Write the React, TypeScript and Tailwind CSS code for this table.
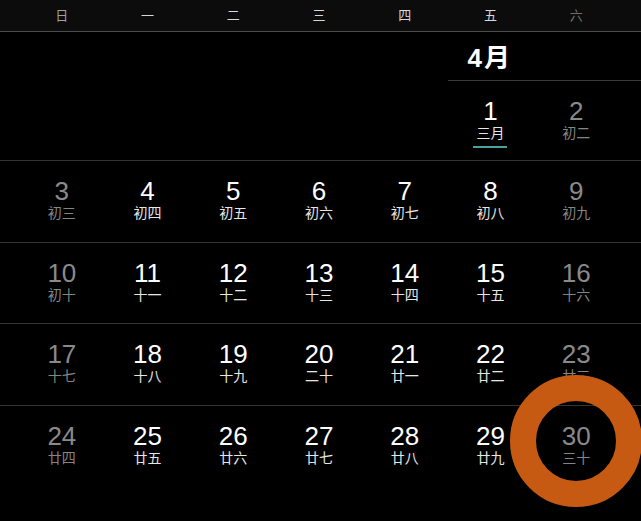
import React from "react";

type Day = { d: number; lunar: string };

const weekdays = ["日", "一", "二", "三", "四", "五", "六"];

const weeks: Day[][] = [
  [
    { d: 3, lunar: "初三" },
    { d: 4, lunar: "初四" },
    { d: 5, lunar: "初五" },
    { d: 6, lunar: "初六" },
    { d: 7, lunar: "初七" },
    { d: 8, lunar: "初八" },
    { d: 9, lunar: "初九" },
  ],
  [
    { d: 10, lunar: "初十" },
    { d: 11, lunar: "十一" },
    { d: 12, lunar: "十二" },
    { d: 13, lunar: "十三" },
    { d: 14, lunar: "十四" },
    { d: 15, lunar: "十五" },
    { d: 16, lunar: "十六" },
  ],
  [
    { d: 17, lunar: "十七" },
    { d: 18, lunar: "十八" },
    { d: 19, lunar: "十九" },
    { d: 20, lunar: "二十" },
    { d: 21, lunar: "廿一" },
    { d: 22, lunar: "廿二" },
    { d: 23, lunar: "廿三" },
  ],
  [
    { d: 24, lunar: "廿四" },
    { d: 25, lunar: "廿五" },
    { d: 26, lunar: "廿六" },
    { d: 27, lunar: "廿七" },
    { d: 28, lunar: "廿八" },
    { d: 29, lunar: "廿九" },
    { d: 30, lunar: "三十" },
  ],
];

function DayCell({ day, weekend, today }: { day: Day; weekend: boolean; today?: boolean }) {
  return (
    <div className="flex flex-col items-center pt-[17px]">
      <div
        className={[
          "text-[26px] leading-[26px]",
          weekend ? "text-[#8a8a8a]" : "text-white",
        ].join(" ")}
      >
        {day.d}
      </div>
      <div
        className={[
          "mt-[1px] text-[14px] leading-[16px]",
          weekend ? "text-[#858585]" : "text-[#e6e6e6]",
        ].join(" ")}
      >
        {day.lunar}
      </div>
      {today && <div className="mt-[5px] h-[2px] w-[34px] bg-[#4aa29d]" />}
    </div>
  );
}

export default function App() {
  return (
    <div
      className="relative h-[521px] w-[641px] overflow-hidden bg-black"
      style={{ fontFamily: '"Liberation Sans", "Noto Sans CJK SC", sans-serif' }}
    >
      {/* weekday header */}
      <div className="h-[32px] border-b border-[#4d4d4d] bg-[#0c0c0c] pl-[19px]">
        <div className="grid h-full w-[600px] grid-cols-7 items-center">
          {weekdays.map((w, i) => (
            <div
              key={w}
              className={[
                "text-center text-[13px] leading-none",
                i === 0 ? "text-[#a0a0a0]" : i === 6 ? "text-[#6e6e6e]" : "text-[#d8d8d8]",
              ].join(" ")}
            >
              {w}
            </div>
          ))}
        </div>
      </div>

      {/* first week with month label */}
      <div className="h-[128px] pl-[19px]">
        <div className="grid h-full w-[600px] grid-cols-7">
          <div className="col-span-5" />
          <div className="col-span-2 flex flex-col">
            <div className="mr-[-22px] flex h-[49px] items-center border-b border-[#3a3a3a] pl-[20px] pt-[4px]">
              <span className="text-[26px] font-bold leading-none tracking-[2px] text-white">4月</span>
            </div>
            <div className="grid flex-1 grid-cols-2">
              <DayCell day={{ d: 1, lunar: "三月" }} weekend={false} today />
              <DayCell day={{ d: 2, lunar: "初二" }} weekend />
            </div>
          </div>
        </div>
      </div>

      {weeks.map((week, wi) => (
        <div key={wi} className="h-[81.5px] border-t border-[#333] pl-[19px]">
          <div className="grid w-[600px] grid-cols-7">
            {week.map((day, di) => (
              <DayCell key={day.d} day={day} weekend={di === 0 || di === 6} />
            ))}
          </div>
        </div>
      ))}

      {/* orange highlight ring */}
      <div className="absolute left-[510px] top-[375px] h-[132px] w-[132px] rounded-full border-[26px] border-[#c65a12]" />
    </div>
  );
}
